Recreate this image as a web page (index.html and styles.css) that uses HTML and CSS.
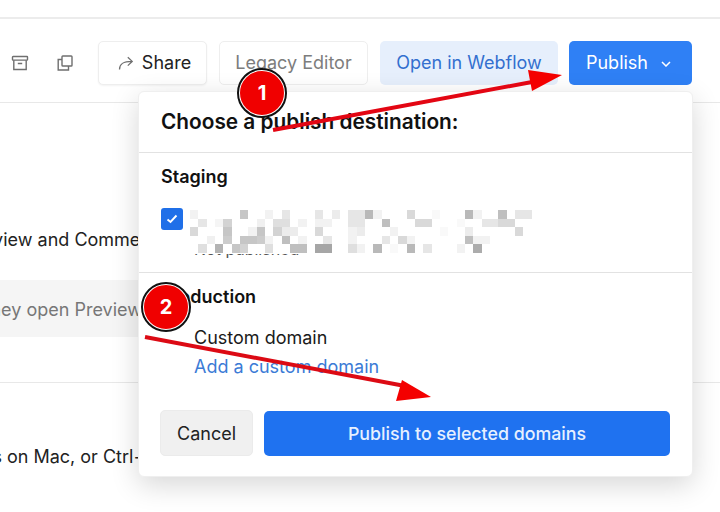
FILE: index.html
```html
<!DOCTYPE html>
<html lang="en">

<head>
    <meta charset="UTF-8">
    <meta name="viewport" content="width=device-width, initial-scale=1.0">
    <title>Publish</title>
    <link rel="stylesheet" href="styles.css">
</head>

<body>
    <div class="page">
        <div class="top-strip"></div>

        <!-- Toolbar -->
        <div class="toolbar">
            <svg class="tool-icon" viewBox="0 0 18 18" fill="none" stroke="#6f6f6f" stroke-width="1.4">
                <rect x="1.5" y="2.5" width="15" height="3.6" rx="0.6"/>
                <path d="M2.8 6.2V15.5H15.2V6.2M6.8 9.5H11.2"/>
            </svg>
            <svg class="tool-icon copy-icon" viewBox="0 0 18 18" fill="none" stroke="#6f6f6f" stroke-width="1.4">
                <rect x="6" y="2" width="10" height="10" rx="0.8"/>
                <path d="M6 5.5H2.2V16H12.5V12"/>
            </svg>
            <button class="btn btn-share">
                <svg class="share-icon" viewBox="0 0 16 16" fill="none" stroke="#6f6f6f" stroke-width="1.3">
                    <path d="M1.5 14.5C1.5 8.8 5 6.4 14 6.4M9.8 2.2L14.2 6.4L9.8 10.6"/>
                </svg>
                Share
            </button>
            <button class="btn btn-legacy">Legacy Editor</button>
            <button class="btn btn-open">Open in Webflow</button>
            <button class="btn btn-publish">
                Publish
                <svg class="chevron" viewBox="0 0 10 6" fill="none" stroke="#ffffff" stroke-width="1.5">
                    <path d="M1 1L5 5L9 1"/>
                </svg>
            </button>
        </div>

        <!-- Page content behind the popup -->
        <div class="content">
            <p class="line line-preview">Preview and Comments</p>
            <div class="note"><span>When they open Preview</span></div>
            <hr class="rule">
            <p class="line line-mac">Press Cmd+s on Mac, or Ctrl+s</p>
        </div>
    </div>

    <!-- Publish popup -->
    <div class="popup">
        <div class="popup-head">Choose a publish destination:</div>

        <div class="section section-staging">
            <h3>Staging</h3>
            <div class="domain-row">
                <span class="checkbox">
                    <svg viewBox="0 0 12 10" fill="none" stroke="#ffffff" stroke-width="1.9">
                        <path d="M1.5 5.5L4.5 8L10.5 1.5"/>
                    </svg>
                </span>
                <div class="domain-blur">
                    <span class="domain-status">Not published</span>
                    <svg class="mosaic" id="mosaic" width="345" height="44" shape-rendering="crispEdges"></svg>
                </div>
            </div>
        </div>

        <div class="section section-prod">
            <h3>Production</h3>
            <p class="domain-name">Custom domain</p>
            <a class="domain-link" href="#">Add a custom domain</a>
        </div>

        <div class="popup-actions">
            <button class="btn-cancel">Cancel</button>
            <button class="btn-confirm">Publish to selected domains</button>
        </div>
    </div>

    <!-- Annotations drawn over the screenshot -->
    <svg class="marks" width="720" height="512" viewBox="0 0 720 512">
        <path d="M273 130L532 82" stroke="#e30613" stroke-width="4" fill="none"/>
        <path d="M528 70L562 75L532 91Z" fill="#f40000"/>
        <path d="M145 337L405 386" stroke="#dc0a14" stroke-width="4" fill="none"/>
        <path d="M402 380L431 397L396 401Z" fill="#f40000"/>
    </svg>
    <div class="badge badge-one">1</div>
    <div class="badge badge-two">2</div>

    <script>
        // Pixelated block over the domain name, one list per row: [column, opacity]
        const rows = [
            [[0,.1],[6,.45],[9,.1],[11,.2],[15,.2],[17,.15],[19,.2],[20,.2],[21,.55],[22,.1],[26,.3],[29,.05],[33,.55],[34,.1],[37,.5],[39,.2],[40,.2]],
            [[1,.2],[3,.08],[4,.35],[8,.12],[10,.25],[11,.25],[13,.1],[15,.1],[16,.1],[19,.2],[20,.2],[23,.5],[27,.3],[28,.3],[32,.05],[35,.2],[36,.2],[37,.3],[38,.3]],
            [[0,.3],[4,.45],[7,.1],[8,.45],[10,.35],[11,.15],[12,.15],[15,.3],[19,.1],[20,.15],[24,.1],[30,.05],[33,.15],[39,.3]],
            [[2,.12],[4,.4],[6,.45],[7,.45],[8,.4],[9,.1],[11,.5],[13,.1],[16,.2],[19,.1],[23,.2],[25,.3],[26,.1],[33,.5],[34,.1],[35,.1]],
            [[1,.25],[3,.6],[5,.45],[6,.35],[9,.25],[12,.5],[13,.5],[15,.7],[16,.7],[19,.25],[20,.1],[22,.55],[24,.05],[26,.55],[28,.2],[32,.1],[34,.65]]
        ];
        document.getElementById('mosaic').innerHTML = rows.map((row, r) =>
            row.map(c =>
                `<rect x="${c[0] * 8.33}" y="${r * 8.6}" width="8.33" height="8.6" fill="#808080" fill-opacity="${c[1]}"/>`
            ).join('')
        ).join('');
    </script>
</body>

</html>
```

FILE: styles.css
```css
* {
    box-sizing: border-box;
}

body {
    margin: 0;
    width: 720px;
    height: 512px;
    overflow: hidden;
    position: relative;
    background: #ffffff;
    color: #1a1a1a;
    font-family: Inter, Arial, sans-serif;
}

.top-strip {
    height: 19px;
    border-bottom: 2px solid #ececec;
}

.toolbar {
    height: 84px;
    padding: 22px 28px 0 11px;
    display: flex;
    align-items: flex-start;
    border-bottom: 1px solid #e8e8e8;
}

.tool-icon {
    width: 18px;
    height: 18px;
    margin-top: 13px;
}

.copy-icon {
    margin-left: 27px;
    margin-right: 24px;
}

.btn {
    height: 44px;
    border-radius: 5px;
    border: 1px solid #eeeeee;
    background: #ffffff;
    font-family: inherit;
    font-size: 18px;
    display: flex;
    align-items: center;
    justify-content: center;
    padding: 0 0 2px;
    flex: none;
}

.btn-share {
    width: 109px;
    padding-left: 4px;
    gap: 8px;
    color: #222222;
    box-shadow: 0 1px 2px rgba(0, 0, 0, 0.05);
}

.share-icon {
    width: 16px;
    height: 16px;
    margin-top: 2px;
}

.btn-legacy {
    width: 149px;
    margin-left: 12px;
    color: #7d7d7d;
}

.btn-open {
    width: 178px;
    margin-left: 12px;
    border: none;
    background: #e6effc;
    color: #336fcf;
}

.btn-publish {
    width: 123px;
    margin-left: 11px;
    padding-right: 4px;
    border: none;
    background: #2f80f5;
    color: #ffffff;
    gap: 13px;
}

.chevron {
    width: 10px;
    height: 6px;
    margin-top: 3px;
}

.content {
    height: 409px;
    overflow: hidden;
}

.line {
    margin: 0;
    font-size: 18px;
    line-height: 24px;
    white-space: nowrap;
    color: #222222;
}

.line-preview {
    margin-top: 125px;
    margin-left: -35px;
}

.note {
    margin-top: 28px;
    height: 57px;
    width: 160px;
    background: #f5f5f5;
    overflow: hidden;
    white-space: nowrap;
    font-size: 18px;
    line-height: 60px;
    color: #777777;
}

.note span {
    margin-left: -70px;
}

.rule {
    margin: 45px 0 0;
    border: none;
    border-top: 1px solid #e8e8e8;
}

.line-mac {
    margin-top: 62px;
    margin-left: -112px;
}

/* Popup */
.popup {
    position: absolute;
    left: 138px;
    top: 91px;
    width: 555px;
    height: 386px;
    background: #ffffff;
    border-radius: 6px;
    border: 1px solid #efefef;
    box-shadow: 0 8px 28px rgba(0, 0, 0, 0.16);
}

.popup-head {
    height: 61px;
    padding: 18px 22px 0;
    font-size: 20.8px;
    line-height: 24px;
    font-weight: 600;
    color: #111111;
    border-bottom: 1px solid #e2e2e2;
}

.section {
    padding: 0 22px;
}

.section h3 {
    margin: 0;
    font-size: 18px;
    line-height: 22px;
    font-weight: 600;
    color: #111111;
}

.section-staging {
    height: 120px;
    padding-top: 13px;
    border-bottom: 1px solid #e2e2e2;
    overflow: hidden;
}

.domain-row {
    margin-top: 19px;
    display: flex;
    gap: 7px;
}

.checkbox {
    width: 22px;
    height: 22px;
    margin-top: 1px;
    border-radius: 3px;
    background: #1f6fe8;
    display: flex;
    align-items: center;
    justify-content: center;
    flex: none;
}

.checkbox svg {
    width: 12px;
    height: 10px;
}

.domain-blur {
    position: relative;
    width: 345px;
    height: 70px;
}

.domain-status {
    position: absolute;
    left: 4px;
    top: 32px;
    font-size: 16px;
    line-height: 20px;
    color: #555555;
}

.mosaic {
    position: absolute;
    left: 0;
    top: 3px;
    background: #ffffff;
    filter: blur(0.6px);
}

.section-prod {
    padding-top: 13px;
}

.domain-name {
    margin: 18px 0 0 33px;
    font-size: 18px;
    line-height: 24px;
    color: #1a1a1a;
}

.domain-link {
    display: block;
    margin: 5px 0 0 33px;
    font-size: 18px;
    line-height: 24px;
    color: #3b7bd6;
    text-decoration: none;
}

.popup-actions {
    margin-top: 31px;
    padding: 0 22px 0 21px;
    display: flex;
    align-items: flex-end;
    gap: 11px;
}

.btn-cancel,
.btn-confirm {
    border-radius: 5px;
    border: none;
    font-family: inherit;
    font-size: 18px;
    padding: 0;
}

.btn-cancel {
    width: 93px;
    height: 46px;
    background: #f0f0f0;
    border: 1px solid #ebebeb;
    color: #222222;
}

.btn-confirm {
    flex: 1;
    height: 45px;
    background: #1f72f0;
    color: #e6f0ff;
    font-size: 17.8px;
    font-weight: 500;
}

/* Annotations */
.marks {
    position: absolute;
    left: 0;
    top: 0;
}

.badge {
    position: absolute;
    width: 48px;
    height: 48px;
    border-radius: 50%;
    background: #f00000;
    border: 2px solid #ffffff;
    outline: 2px solid #111111;
    outline-offset: -1px;
    color: #ffffff;
    font-size: 20px;
    font-weight: 700;
    display: flex;
    align-items: center;
    justify-content: center;
}

.badge-one {
    left: 238px;
    top: 69px;
}

.badge-two {
    left: 142px;
    top: 283px;
}
```
